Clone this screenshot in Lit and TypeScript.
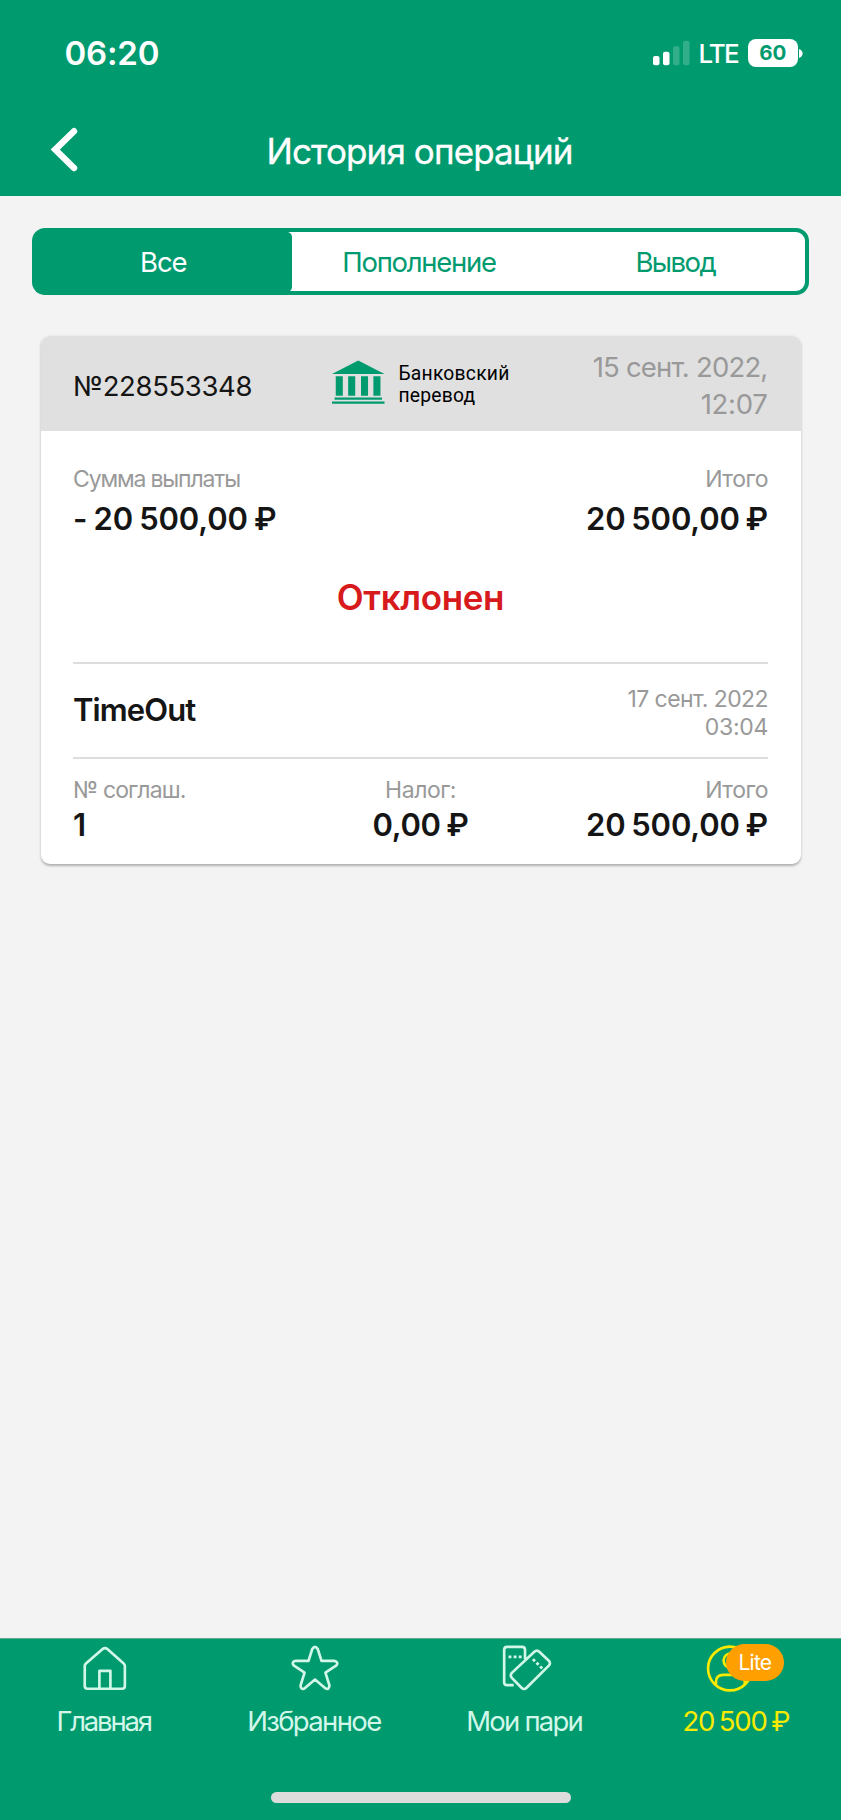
import { LitElement, html, css, svg } from "lit";
import { customElement, property } from "lit/decorators.js";

@customElement("status-bar")
class StatusBar extends LitElement {
  static styles = css`
    :host { display: flex; align-items: center; justify-content: space-between; height: 106px; padding: 0 38px 0 64.5px; box-sizing: border-box; color: #fff; }
    .time { font-size: 33px; font-weight: 600; letter-spacing: -0.2px; line-height: 40px; }
    .right { display: flex; align-items: center; }
    .signal { width: 38px; height: 26px; display: block; }
    .net { font-size: 26px; font-weight: 450; letter-spacing: -1.9px; line-height: 32px; margin-left: 8px; width: 42px; margin-top: 1px; }
    .battery { background: #fff; color: #009a6f; width: 49.5px; height: 28px; border-radius: 8px; font-size: 20.5px; font-weight: 700; line-height: 28px; text-align: center; margin-left: 7.5px; }
    .cap { width: 4px; height: 9px; margin-left: 1.5px; display: block; }
  `;
  render() {
    return html`
      <div class="time">06:20</div>
      <div class="right">
        <svg class="signal" viewBox="0 0 38 26">
          <rect x="0" y="16" width="6.5" height="9.3" rx="2" fill="#fff" />
          <rect x="10" y="11.8" width="6.5" height="13.5" rx="2" fill="#fff" />
          <rect x="20" y="6.3" width="6.5" height="19" rx="2" fill="#fff" fill-opacity=".2" />
          <rect x="30" y="0.7" width="6.5" height="24.6" rx="2" fill="#fff" fill-opacity=".2" />
        </svg>
        <div class="net">LTE</div>
        <div class="battery">60</div>
        <svg class="cap" viewBox="0 0 4 9"><path d="M0 0C2.2 .6 3.6 2.4 3.6 4.5C3.6 6.6 2.2 8.4 0 9Z" fill="#fff" /></svg>
      </div>
    `;
  }
}

@customElement("page-header")
class PageHeader extends LitElement {
  static styles = css`
    :host { display: grid; grid-template-columns: 100px 1fr 100px; align-items: center; height: 89px; color: #fff; }
    .back { width: 30px; height: 48px; margin: -4px 0 0 50px; display: block; }
    .title { text-align: center; font-size: 35px; font-weight: 400; letter-spacing: -0.88px; line-height: 44px; margin-left: -2px; -webkit-text-stroke: 0.3px #fff; }
  `;
  render() {
    return html`
      <svg class="back" viewBox="0 0 30 48">
        <path d="M24 6.2L5.200 24.600L24 43" fill="none" stroke="#fff" stroke-width="6.4" stroke-linecap="round" stroke-linejoin="miter" />
      </svg>
      <div class="title">История операций</div>
    `;
  }
}

@customElement("filter-tabs")
class FilterTabs extends LitElement {
  static styles = css`
    :host { display: grid; grid-template-columns: repeat(3, 1fr); height: 67px; box-sizing: border-box; margin: 33px 32px 0; border: 4px solid #009a6f; border-radius: 13px; background: #fff; color: #009a6f; font-size: 27.5px; line-height: 60px; text-align: center; }
    .active { background: #009a6f; color: #fff; border-radius: 0 5px 5px 0; letter-spacing: -1.2px; padding-right: 2px; }
    .deposit { letter-spacing: -1.3px; padding-right: 3px; }
    .withdraw { letter-spacing: -1.55px; padding-right: 3px; }
  `;
  render() {
    return html`
      <div class="active">Все</div>
      <div class="deposit">Пополнение</div>
      <div class="withdraw">Вывод</div>
    `;
  }
}

@customElement("operation-card")
class OperationCard extends LitElement {
  static styles = css`
    :host { display: block; margin: 41px 40.5px 0; height: 528px; border-radius: 9px; background: #fff; box-shadow: 0 1.5px 2.5px rgba(0, 0, 0, .28); overflow: hidden; color: #151515; }
    .head { display: grid; grid-template-columns: 259px 1fr 190px; align-items: center; height: 95px; padding: 0 33px 0 32.5px; box-sizing: border-box; background: #e0e0e0; }
    .number { font-size: 27.5px; letter-spacing: -0.36px; line-height: 34px; padding-top: 5px; }
    .method { display: flex; align-items: center; gap: 14px; }
    .bank { width: 52.5px; height: 44px; display: block; margin-top: -4px; }
    .method-name { font-family: Roboto, sans-serif; font-size: 19.3px; line-height: 22.5px; letter-spacing: .22px; color: #000; padding-top: 3px; }
    .date { font-size: 27.5px; letter-spacing: -0.8px; line-height: 37px; text-align: right; color: #999; padding-top: 4px; }
    .date .t { letter-spacing: -0.3px; }
    .body { padding: 0 32.5px; }
    .row { display: flex; justify-content: space-between; }
    .sums { padding-top: 34px; }
    .label { font-size: 23px; line-height: 28px; color: #999; }
    .value { font-size: 31px; font-weight: 600; line-height: 40px; letter-spacing: -0.13px; word-spacing: -2px; white-space: nowrap; }
    .sums .value { margin-top: 6px; }
    .payout { word-spacing: -1.5px; }
    .end { text-align: right; }
    .mid { text-align: center; }
    .l-sum { letter-spacing: -1.17px; }
    .l-total { letter-spacing: -0.48px; }
    .l-agree { letter-spacing: -0.85px; }
    .status { text-align: center; font-size: 35px; font-weight: 600; letter-spacing: -0.35px; line-height: 44px; color: #d71a1c; margin: 36px 0 43px; }
    .event { display: flex; justify-content: space-between; align-items: center; height: 97px; box-sizing: border-box; border-top: 2px solid #ddd; border-bottom: 2px solid #ddd; }
    .event .event-name { letter-spacing: -0.9px; margin-top: -2px; }
    .event-date { letter-spacing: -0.57px; padding-top: 4px; }
    .event-date .t { letter-spacing: -0.3px; }
    .foot { display: grid; grid-template-columns: 1fr 1fr 1fr; padding-top: 17px; }
    .foot .value { margin-top: 1px; }
    .tax { letter-spacing: -0.35px; }
  `;
  render() {
    return html`
      <div class="head">
        <div class="number">№228553348</div>
        <div class="method">
          <svg class="bank" viewBox="0 0 52 44" preserveAspectRatio="none" fill="#009a6f">
            <path d="M26 .5L52 14H0Z" />
            <path d="M3.7 16.3h7v19.500h-7zM16 16.3h7v19.500h-7zM28.700 16.3h7v19.500h-7zM41 16.3h7v19.500h-7zM2.500 37.600h47v2.200h-47zM0 41.500h52v2.200H0z" />
          </svg>
          <div class="method-name">Банковский<br />перевод</div>
        </div>
        <div class="date">15 сент. 2022,<br /><span class="t">12:07</span></div>
      </div>
      <div class="body">
        <div class="row sums">
          <div>
            <div class="label l-sum">Сумма выплаты</div>
            <div class="value payout">- 20 500,00 ₽</div>
          </div>
          <div class="end">
            <div class="label l-total">Итого</div>
            <div class="value">20 500,00 ₽</div>
          </div>
        </div>
        <div class="status">Отклонен</div>
        <div class="event">
          <div class="value event-name">TimeOut</div>
          <div class="label end event-date">17 сент. 2022<br /><span class="t">03:04</span></div>
        </div>
        <div class="foot">
          <div>
            <div class="label l-agree">№ соглаш.</div>
            <div class="value">1</div>
          </div>
          <div class="mid">
            <div class="label l-total">Налог:</div>
            <div class="value tax">0,00 ₽</div>
          </div>
          <div class="end">
            <div class="label l-total">Итого</div>
            <div class="value">20 500,00 ₽</div>
          </div>
        </div>
      </div>
    `;
  }
}

const icons: Record<string, unknown> = {
  home: svg`<path d="M9.4 28.5Q9.4 27 10.600 25.900L27.600 11.300Q30 9.200 32.400 11.300L49 25.900Q50.200 27 50.200 28.500V48.500Q50.200 51.600 47.400 51.600H12.200Q9.4 51.600 9.4 48.500ZM24.300 51V33.500H35.500V51" />`,
  star: svg`<path d="M27.200 11.200Q30 6.800 32.800 11.200L36.600 23.300H49.500Q54.500 24.300 51.800 27.800L40.600 35.300L44.700 48.300Q44 53.300 40.800 51.300L30 42.300L19.200 51.300Q15.500 53 15.300 48.300L19.400 35.300L8.300 27.800Q5.500 24.200 10.500 23.300H23.400Z" />`,
  tickets: svg`<path d="M29 21.500V12Q29 9 26 9H10.800Q7.800 9 7.800 12V45Q7.800 48 10.800 48H17.500" />
    <path d="M15.600 35.500L38.500 13.900Q41 11.600 43.500 13.900L53.200 23.100Q55.400 25.600 53.200 28.100L30.600 50.600Q28 53.200 25.400 50.600L15.600 40.500Q13.400 38 15.600 35.500Z" />
    <path class="dots" d="M12.200 19.300H26M37 21.500L46.500 31" />`,
  user: svg`<circle cx="30" cy="31" r="22.3" /><circle cx="31" cy="23" r="7.5" />
    <path d="M15.700 47V45Q15.700 37.500 23 37.500H37.500Q45 37.500 45 45V47" />`,
};

@customElement("nav-item")
class NavItem extends LitElement {
  @property() icon = "home";
  @property() label = "";
  @property() badge = "";
  static styles = css`
    :host { display: flex; flex-direction: column; align-items: center; color: #d2f7e9; }
    :host([selected]) { color: #f8ea00; }
    .icon { position: relative; width: 60px; height: 60px; }
    svg { display: block; width: 60px; height: 59px; fill: none; stroke: currentColor; stroke-width: 2.7; stroke-linejoin: round; }
    .dots { stroke-width: 2.8; stroke-dasharray: 3 2.2; }
    .label { margin-top: 6px; font-size: 27.5px; line-height: 34px; white-space: nowrap; padding-right: 3px; }
    .home { letter-spacing: -2.2px; }
    .star { letter-spacing: -1.65px; }
    .tickets { letter-spacing: -1.8px; }
    .user { letter-spacing: -1.2px; word-spacing: -2px; padding-right: 0; }
    .icon-user { margin-left: -12px; }
    .badge { position: absolute; left: 26px; top: 6px; width: 58px; height: 37px; border-radius: 19px; background: #ff9f00; color: #fff; font-size: 21px; letter-spacing: -0.8px; line-height: 38px; text-align: center; }
  `;
  render() {
    return html`
      <div class="icon icon-${this.icon}">
        <svg viewBox="0 0 60 60">${icons[this.icon]}</svg>
        ${this.badge ? html`<div class="badge">${this.badge}</div>` : ""}
      </div>
      <div class="label ${this.icon}">${this.label}</div>
    `;
  }
}

@customElement("app-root")
class AppRoot extends LitElement {
  static styles = css`
    :host { display: flex; flex-direction: column; height: 1820px; background: #f3f3f3; font-family: Inter, "Liberation Sans", sans-serif; }
    .top { background: #009a6f; height: 196px; }
    .main { flex: 1; display: flow-root; margin-top: -1px; }
    .bottom { background: #009a6f; height: 182px; box-sizing: border-box; border-top: 1px solid #5fa98f; display: flex; flex-direction: column; justify-content: space-between; align-items: center; }
    .nav { display: grid; grid-template-columns: repeat(4, 1fr); width: 100%; margin-top: -1px; }
    .bar { width: 300px; height: 11px; border-radius: 6px; background: #dcdcdc; margin-bottom: 17px; }
  `;
  render() {
    return html`
      <div class="top">
        <status-bar></status-bar>
        <page-header></page-header>
      </div>
      <div class="main">
        <filter-tabs></filter-tabs>
        <operation-card></operation-card>
      </div>
      <div class="bottom">
        <div class="nav">
          <nav-item icon="home" label="Главная"></nav-item>
          <nav-item icon="star" label="Избранное"></nav-item>
          <nav-item icon="tickets" label="Мои пари"></nav-item>
          <nav-item icon="user" label="20 500 ₽" badge="Lite" selected></nav-item>
        </div>
        <div class="bar"></div>
      </div>
    `;
  }
}
